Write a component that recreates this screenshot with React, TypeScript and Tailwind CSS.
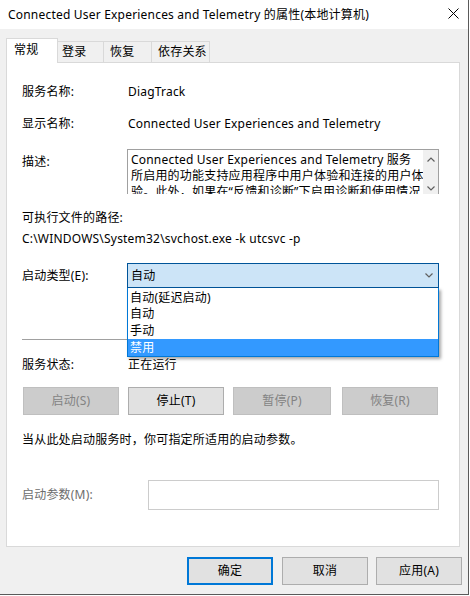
import React from "react";

const font = "[font-family:'Noto_Sans','Noto_Sans_CJK_SC',sans-serif]";

function Chevron({ up = false }: { up?: boolean }) {
  return (
    <svg width="8" height="5" viewBox="0 0 8 5" className="block">
      <path
        d={up ? "M0.5 4.5 L4 1 L7.5 4.5" : "M0.5 0.5 L4 4 L7.5 0.5"}
        fill="none"
        stroke="#606060"
        strokeWidth="1.2"
      />
    </svg>
  );
}

function Btn({
  label,
  disabled,
  w,
  primary,
  className = "",
}: {
  label: string;
  disabled?: boolean;
  w: string;
  primary?: boolean;
  className?: string;
}) {
  const base = disabled
    ? "bg-[#cccccc] border border-[#bfbfbf] text-[#838383]"
    : primary
    ? "bg-[#e1e1e1] border-2 border-[#0078d7] text-black"
    : "bg-[#e1e1e1] border border-[#adadad] text-black";
  return (
    <div
      className={`${w} h-[28px] flex items-center justify-center text-[12px] ${base} ${className}`}
    >
      {label}
    </div>
  );
}

export default function App() {
  return (
    <div className={`w-[470px] h-[596px] bg-white ${font} text-[12px] leading-[16px] tracking-[0.2px] text-black`}>
      <div className="w-[469px] h-[595px] border-r border-b border-[#5a5a5a] flex flex-col bg-[#f0f0f0]">
        {/* Title bar */}
        <div className="h-[29px] bg-white flex items-center pl-[8px] pr-[9px] shrink-0">
          <div className="flex-1 whitespace-nowrap">
            Connected User Experiences and Telemetry 的属性(本地计算机)
          </div>
          <svg width="11" height="11" viewBox="0 0 11 11" className="mt-[-2px]">
            <path d="M0.5 0.5 L10.5 10.5 M10.5 0.5 L0.5 10.5" stroke="#000" strokeWidth="1" />
          </svg>
        </div>

        {/* Body */}
        <div className="flex-1 flex flex-col pl-[6px] pr-[8px] pt-[9px]">
          {/* Tabs */}
          <div className="flex items-end h-[24px] relative z-10">
            <div className="w-[52px] h-[25px] -mb-[1px] bg-white border-l border-t border-r border-[#d9d9d9] pl-[7px] pt-[3px]">
              常规
            </div>
            <div className="w-[46px] h-[21px] border-t border-r border-[#d9d9d9] pl-[4px] pt-[2px]">
              登录
            </div>
            <div className="w-[48px] h-[21px] border-t border-r border-[#d9d9d9] pl-[6px] pt-[2px]">
              恢复
            </div>
            <div className="w-[58px] h-[21px] border-t border-r border-[#d9d9d9] pl-[6px] pt-[2px]">
              依存关系
            </div>
          </div>

          {/* Panel */}
          <div className="h-[485px] bg-white border border-[#d9d9d9] flex flex-col pl-[15px] shrink-0">
            <div className="mt-[21px] h-[16px] flex items-center">
              <div className="w-[106px]">服务名称:</div>
              <div>DiagTrack</div>
            </div>
            <div className="mt-[16px] h-[16px] flex items-center">
              <div className="w-[106px]">显示名称:</div>
              <div className="whitespace-nowrap">Connected User Experiences and Telemetry</div>
            </div>
            <div className="mt-[17px] flex">
              <div className="w-[105px] mt-[5px]">描述:</div>
              <div className="w-[312px] h-[45px] border-l border-t border-r border-[#a0a0a0] flex overflow-hidden">
                <div className="flex-1 pl-[3px] pt-[2px] whitespace-nowrap overflow-hidden">
                  <div>Connected User Experiences and Telemetry 服务</div>
                  <div>所启用的功能支持应用程序中用户体验和连接的用户体</div>
                  <div>验。此外，如果在“反馈和诊断”下启用诊断和使用情况</div>
                </div>
                <div className="w-[15px] bg-[#f0f0f0] flex flex-col items-center pt-[7px]">
                  <Chevron up />
                  <div className="h-[24px]" />
                  <Chevron />
                </div>
              </div>
            </div>
            <div className="mt-[16px] h-[16px]">可执行文件的路径:</div>
            <div className="mt-[5px] h-[16px] whitespace-nowrap">
              C:\WINDOWS\System32\svchost.exe -k utcsvc -p
            </div>
            <div className="mt-[16px] flex items-center">
              <div className="w-[105px]">启动类型(E):</div>
              <div className="relative w-[312px] h-[25px]">
                <div className="h-full bg-[#cce4f7] border border-[#005499] flex items-center pl-[3px] pr-[5px]">
                  <div className="flex-1">自动</div>
                  <Chevron />
                </div>
                <div className="absolute left-0 top-[25px] w-[312px] bg-white border-l border-r border-b border-[#0078d7] shadow-[2px_2px_3px_rgba(0,0,0,0.35)] z-20">
                  <div className="h-[17px] flex items-center pl-[2px] pt-[2px]">自动(延迟启动)</div>
                  <div className="h-[17px] flex items-center pl-[2px] pt-[1px]">自动</div>
                  <div className="h-[17px] flex items-center pl-[2px] pt-[1px]">手动</div>
                  <div className="h-[17px] flex items-center pl-[2px] pt-[1px] bg-[#3399ff] text-white">禁用</div>
                </div>
              </div>
            </div>
            <div className="mt-[51px] h-[1px] w-[417px] bg-[#a0a0a0]" />
            <div className="mt-[17px] h-[16px] flex items-center">
              <div className="w-[106px]">服务状态:</div>
              <div>正在运行</div>
            </div>
            <div className="mt-[14px] flex ml-[1px]">
              <Btn label="启动(S)" w="w-[96px]" disabled />
              <Btn label="停止(T)" w="w-[96px]" className="ml-[9px]" />
              <Btn label="暂停(P)" w="w-[98px]" disabled className="ml-[9px]" />
              <Btn label="恢复(R)" w="w-[96px]" disabled className="ml-[11px]" />
            </div>
            <div className="mt-[17px] h-[16px] whitespace-nowrap">
              当从此处启动服务时，你可指定所适用的启动参数。
            </div>
            <div className="mt-[32px] flex items-center">
              <div className="w-[126px] text-[#6d6d6d]">启动参数(M):</div>
              <div className="w-[291px] h-[30px] bg-white border border-[#cccccc]" />
            </div>
          </div>

          {/* Bottom buttons */}
          <div className="mt-[10px] flex justify-end -mr-[2px]">
            <Btn label="确定" w="w-[86px]" primary />
            <Btn label="取消" w="w-[86px]" className="ml-[9px]" />
            <Btn label="应用(A)" w="w-[86px]" className="ml-[8px]" />
          </div>
        </div>
      </div>
    </div>
  );
}
